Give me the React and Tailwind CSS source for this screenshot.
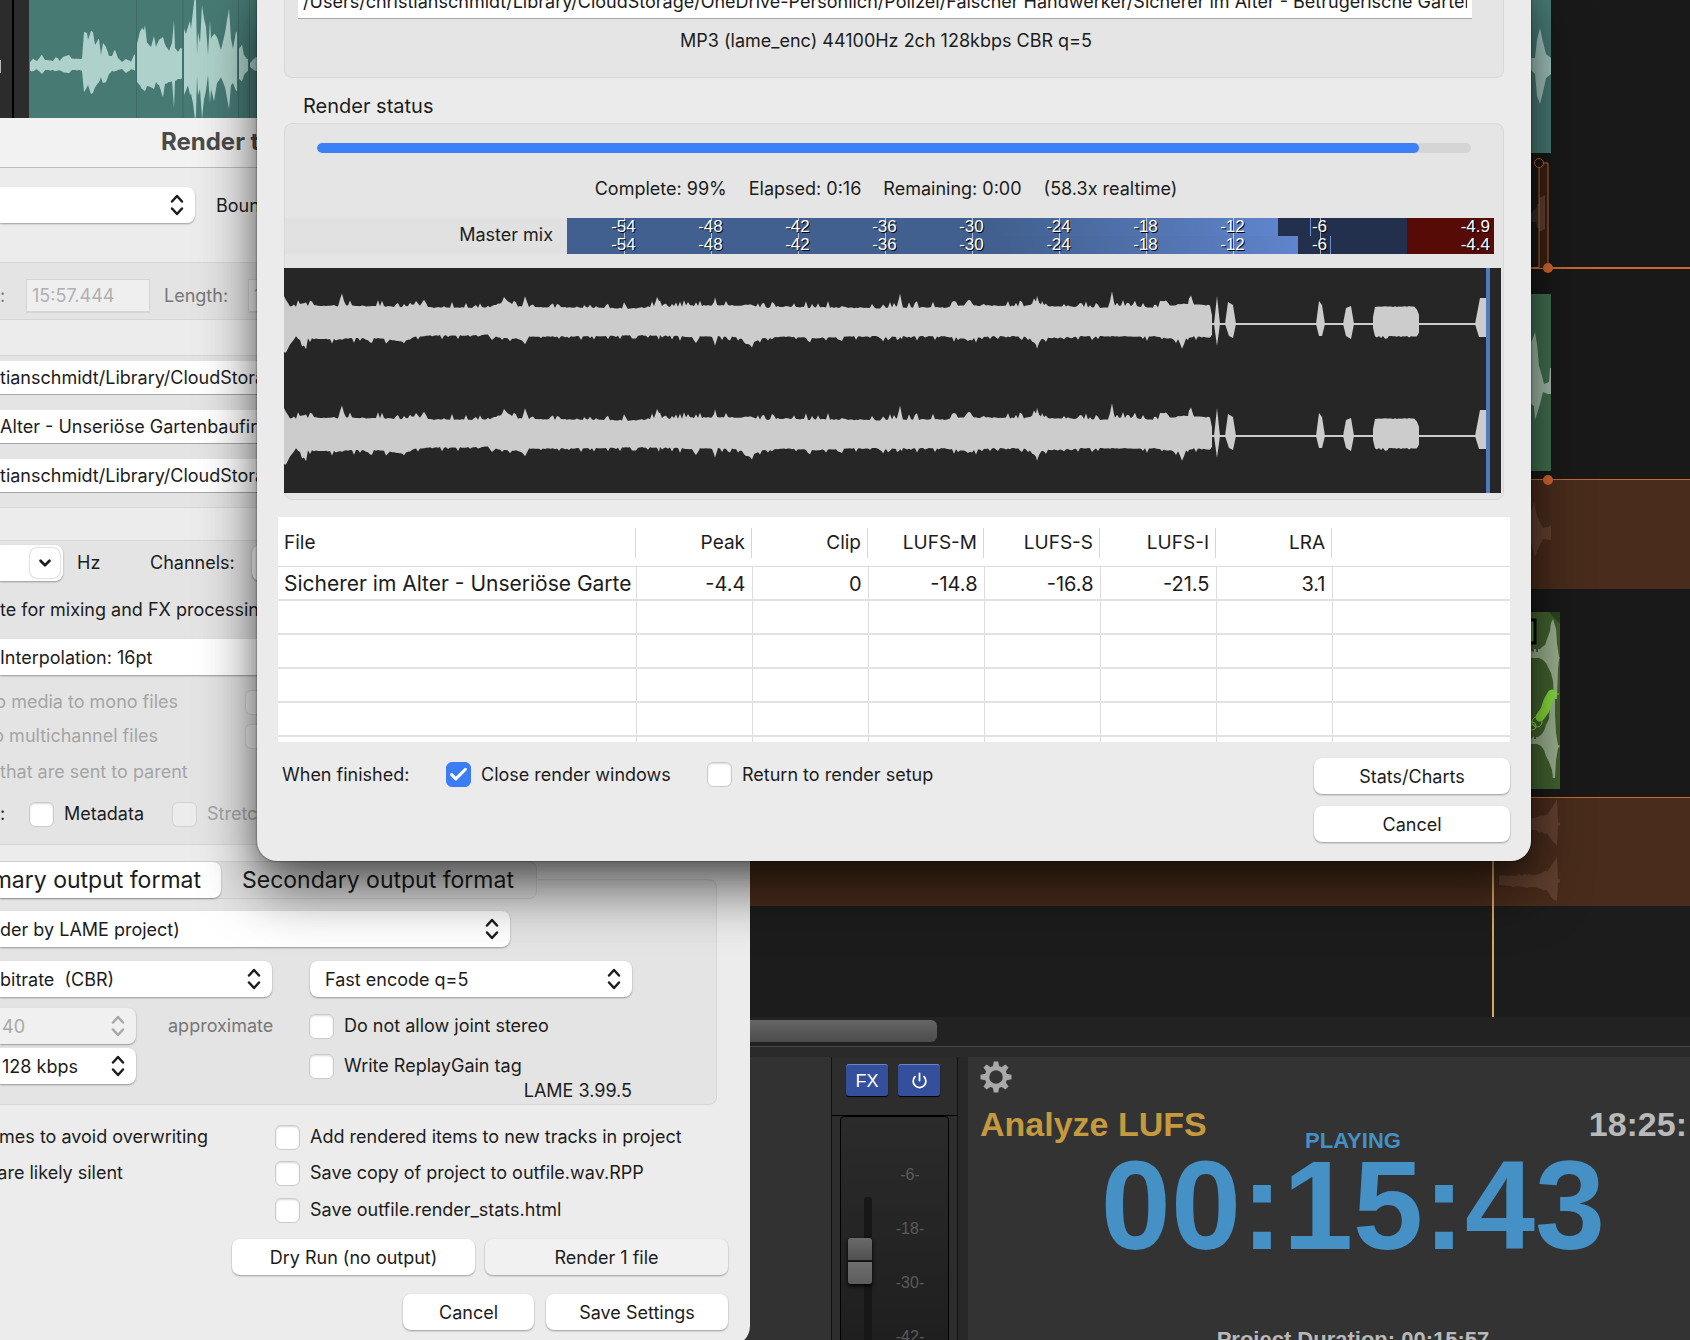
import React, { useState } from "react";
import { Check, ChevronDown, Power } from "lucide-react";

// Small seeded generator so the waveforms look the same on every render
const makeRandom = (seed) => {
  let s = seed;
  return () => {
    s = (s * 16807) % 2147483647;
    return s / 2147483647;
  };
};

// points: [x, up, down], interpolated and roughened into a closed path round `mid`
const wavePath = (points, mid, jitter, seed, step = 2) => {
  const random = makeRandom(seed);
  // mostly flat, with a narrow peak now and then
  const bump = () => (random() < 0.3 ? random() * jitter : (random() * jitter) / 6);
  const top = [];
  const bottom = [];
  for (let i = 0; i < points.length - 1; i++) {
    const [x0, u0, d0] = points[i];
    const [x1, u1, d1] = points[i + 1];
    for (let x = x0; x < x1; x += step) {
      const t = (x - x0) / (x1 - x0);
      const up = u0 + (u1 - u0) * t;
      const down = d0 + (d1 - d0) * t;
      const spike = bump();
      const dip = bump() * 0.7;
      top.push(`${x} ${(mid - up - (up > 3 ? spike : 0)).toFixed(1)}`);
      bottom.unshift(`${x} ${(mid + down + (down > 3 ? dip : 0)).toFixed(1)}`);
    }
  }
  return `M${top.join("L")}L${bottom.join("L")}Z`;
};

const mixPoints = [
  [0, 26, 28], [2, 24, 28], [6, 17, 20], [12, 17, 12], [18, 20, 18], [22, 21, 25], [24, 18, 14], [54, 17, 15],
  [56, 18, 15], [58, 27, 15], [60, 18, 14], [96, 17, 14], [120, 17, 17], [132, 19, 12], [136, 18, 12],
  [140, 24, 12], [144, 16, 11], [180, 16, 11], [204, 16, 10], [214, 18, 13], [222, 24, 14], [232, 17, 14],
  [238, 17, 16], [241, 27, 20], [245, 16, 12], [300, 16, 12], [340, 15, 11], [370, 16, 11], [373, 26, 11],
  [376, 17, 11], [398, 17, 12], [408, 18, 13], [412, 18, 19], [416, 18, 12], [428, 18, 12], [431, 21, 21],
  [434, 18, 12], [456, 18, 13], [466, 19, 21], [476, 16, 14], [500, 16, 12], [532, 16, 14], [560, 16, 12],
  [596, 15, 12], [599, 19, 17], [602, 16, 12], [613, 17, 12], [616, 29, 12], [619, 16, 12], [660, 16, 12],
  [680, 18, 14], [684, 23, 14], [690, 18, 14], [704, 18, 12], [740, 17, 12], [748, 19, 15], [753, 23, 22],
  [758, 18, 14], [796, 16, 12], [824, 16, 12], [828, 28, 12], [831, 18, 12], [870, 16, 12], [888, 18, 14],
  [894, 19, 15], [898, 20, 24], [902, 19, 14], [905, 20, 13], [907, 28, 13], [910, 19, 12], [926, 18, 13],
  [929, 3, 3],
];

// Short bursts after the music has ended
const burstPaths = (mid) => [
  `M930 ${mid}L933 ${mid - 28}L936 ${mid}L933 ${mid + 22}Z`,
  `M941 ${mid}L944 ${mid - 22}L949 ${mid - 19}L952 ${mid}L949 ${mid + 14}L945 ${mid + 12}Z`,
  `M1032 ${mid}L1035 ${mid - 23}L1038 ${mid - 19}L1041 ${mid}L1038 ${mid + 12}L1035 ${mid + 12}Z`,
  `M1059 ${mid}L1062 ${mid - 16}L1067 ${mid - 18}L1070 ${mid}L1067 ${mid + 15}L1062 ${mid + 12}Z`,
  `M1191 ${mid}L1196 ${mid - 26}L1203 ${mid - 26}L1203 ${mid + 13}L1195 ${mid + 13}Z`,
].join("");

const blockPoints = [[1089, 6, 4], [1091, 17, 12], [1130, 17, 12], [1133, 14, 12], [1137, 4, 4]];

const clipPoints = [
  [[30, 3, 6], [33, 6, 6], [37, 4, 4], [42, 10, 9], [45, 5, 5], [53, 4, 5], [56, 8, 6], [60, 4, 5],
    [63, 8, 7], [69, 10, 8], [72, 6, 5], [80, 6, 5], [82, 6, 6], [84, 33, 27], [87, 32, 22], [88, 25, 20],
    [91, 34, 29], [93, 33, 28], [95, 20, 22], [99, 26, 17], [101, 10, 12], [103, 22, 18], [106, 18, 17],
    [109, 9, 9], [112, 9, 6], [115, 15, 6], [118, 7, 5], [122, 3, 4], [126, 6, 8], [131, 3, 4], [134, 10, 5],
    [136, 11, 6]],
  [[137, 21, 17], [140, 33, 20], [142, 37, 24], [144, 35, 25], [145, 40, 26], [147, 22, 21], [151, 18, 22],
    [154, 29, 24], [156, 18, 17], [159, 25, 20], [163, 28, 32], [165, 20, 19], [169, 14, 17], [172, 22, 16],
    [174, 45, 43], [175, 17, 16], [178, 13, 14], [181, 17, 14], [183, 15, 13]],
  [[184, 36, 30], [186, 31, 25], [188, 38, 20], [190, 44, 30], [191, 36, 28], [193, 54, 38], [195, 70, 55],
    [196, 64, 50], [197, 10, 10], [198, 33, 30], [200, 22, 24], [202, 60, 54], [204, 46, 34], [206, 38, 25],
    [208, 10, 10], [210, 45, 38], [211, 26, 24], [214, 31, 36], [217, 28, 18], [221, 15, 12], [225, 32, 22],
    [229, 56, 44], [231, 26, 20], [233, 16, 18], [236, 33, 26], [238, 32, 25]],
  [[239, 16, 14], [242, 20, 16], [244, 10, 10], [247, 6, 6], [249, 6, 6]],
  [[250, 2, 2], [256, 8, 6], [259, 6, 5]],
];

const tailPoints = [[0, 5, 4], [18, 5, 5], [36, 6, 6], [48, 9, 9], [54, 18, 18], [58, 24, 20], [59, 2, 2], [62, 1, 1]];

const labelText = "text-[18px] leading-6 whitespace-nowrap";

function UpDown({ dim }) {
  return (
    <svg
      viewBox="0 0 16 22"
      className={`pointer-events-none absolute right-[10px] top-[7px] h-[22px] w-4 ${dim ? "text-[#a8a8a8]" : "text-[#1c1c1c]"}`}
      fill="none"
      stroke="currentColor"
      strokeWidth="2.5"
      strokeLinecap="round"
      strokeLinejoin="round"
    >
      <path d="M3 7.5L8 2l5 5.5M3 14.500l5 5.5 5-5.500" />
    </svg>
  );
}

function Popup({ label, value, className, pad = "pl-0", dim = false, round = "rounded-r-[8px]" }) {
  return (
    <div className={`relative h-9 shrink-0 ${className}`}>
      <select
        aria-label={label}
        disabled={dim}
        className={`h-9 w-full appearance-none text-[18px] opacity-100 shadow-[0_1px_2px_rgba(0,0,0,0.35)] outline-none ${pad} ${round} ${dim ? "bg-[#f0f0f0] text-[#a8a8a8]" : "bg-white text-[#1c1c1c]"}`}
      >
        <option>{value}</option>
      </select>
      <UpDown dim={dim} />
    </div>
  );
}

function TickBox({ label, checked = false, dim = false, gap = "gap-[10px]" }) {
  const [on, setOn] = useState(checked);
  return (
    <label className={`flex shrink-0 items-center ${gap} ${labelText} ${dim ? "text-[#a5a5a5]" : "text-[#1c1c1c]"}`}>
      <span className="relative size-[25px] shrink-0">
        <input
          type="checkbox"
          checked={on}
          disabled={dim}
          aria-label={label || "Option"}
          onChange={(e) => setOn(e.target.checked)}
          className={`block size-[25px] appearance-none rounded-[6px] border ${dim ? "border-[#d2d2d2] bg-[#ececec]" : "border-[#cbcbcb] bg-white shadow-[inset_0_1px_2px_rgba(0,0,0,0.15)]"} checked:border-[#3b7df5] checked:bg-[#3b7df5] checked:shadow-none`}
        />
        {on && (
          <Check strokeWidth={3.5} className="pointer-events-none absolute left-[2px] top-[2px] size-[21px] text-white" />
        )}
      </span>
      {label && <span>{label}</span>}
    </label>
  );
}

function PushButton({ children, className, tone = "bg-white" }) {
  return (
    <button
      type="button"
      className={`h-9 rounded-[8px] text-[18px] text-[#1c1c1c] shadow-[0_1px_2px_rgba(0,0,0,0.35)] ${tone} ${className}`}
    >
      {children}
    </button>
  );
}

function PathField({ label, value }) {
  return (
    <input
      type="text"
      aria-label={label}
      defaultValue={value}
      className="block h-[34px] w-[400px] border-b border-[#a5a5a5] bg-white text-[18px] text-[#1c1c1c] outline-none"
    />
  );
}

/* ---------- Arrange view behind the windows ---------- */

function Arrange() {
  return (
    <div className="relative min-h-0 flex-1 overflow-hidden bg-[#1c1c1c]">
      <div className="relative h-[153px] bg-[#191919]">
        <div className="absolute left-0 top-0 h-full w-[14px] border-r-2 border-black bg-[#2c2c2c]" />
        <div className="absolute left-[14px] top-0 h-full w-[15px] bg-[#2c2c2c]" />
        <div className="absolute left-0 top-[60px] h-[13px] w-px bg-[#b5b5b5]" />
        <div className="absolute left-[29px] top-0 h-full w-[1522px] bg-[#487a74]" />
        <svg className="absolute left-0 top-0 h-[153px] w-[258px]" viewBox="0 0 258 153">
          <path d="M136.500 0v153M183 0v153M238.500 0v153M249.500 0v153" stroke="#3d6b66" strokeWidth="1" />
          <g fill="#aed2cb">
            {clipPoints.map((points) => (
              <path key={points[0][0]} d={wavePath(points, 65, 1, 11, 1)} />
            ))}
          </g>
        </svg>
        <svg className="absolute left-[1531px] top-0 h-[153px] w-5" viewBox="0 0 20 153">
          <path d="M0 58h4l2-18 3-12 3 14 3 12 5 4v16l-5 4-3 14-3 12-3-8-2-22-4-4z" fill="#a2c4be" />
        </svg>
      </div>

      <div className="relative h-[116px] border-b-2 border-[#c8692f] bg-[#191919]">
        <svg className="absolute left-[1531px] top-0 h-[116px] w-[40px] overflow-visible" viewBox="0 0 40 116">
          <path d="M0 60l6-6v-3h2v24H6l-1-6H0z" fill="#33302e" />
          <path d="M8 10h9v105H8z" fill="#3b2213" />
          <path d="M8 45l6-3v34l-6 3z" fill="#5e4030" />
          <path d="M0 115h8V10h9v105" fill="none" stroke="#c8692f" />
          <circle cx="8" cy="10" r="4.500" fill="#191919" stroke="#c8692f" />
        </svg>
      </div>

      <div className="relative h-[210px] bg-[#191919]">
        <div className="absolute left-[300px] top-[25px] h-[177px] w-[1251px] bg-[#427050]" />
        <div className="absolute left-[1543px] -top-[6px] size-[10px] rounded-full bg-[#d2662e]" />
        <svg className="absolute left-[1531px] top-[25px] h-[177px] w-5" viewBox="0 0 20 177">
          <path d="M0 48l2-4 2-6 2 12 2 22 3 10 2 8 5-2 1-14h1v26h-3l-5-2-3 12-3 10-2 6-1-14-3-2z" fill="#a2bda8" />
        </svg>
      </div>

      <div className="relative h-[110px] border-t border-[#c8692f] bg-[#492c1b]">
        <svg className="absolute left-[1531px] top-0 h-[108px] w-6 overflow-visible" viewBox="0 0 24 108">
          <circle cx="17" cy="0" r="5" fill="#d2662e" />
          <path d="M0 32l3-10 3 14 4 8 2 4 8-2v14l-8-1-2 4-4 8-2 6-4-14z" fill="#61402f" />
        </svg>
      </div>

      <div className="relative h-[208px] bg-[#191919]">
        <div className="absolute left-[300px] top-[23px] h-[177px] w-[1260px] bg-[#436230]" />
        <svg className="absolute left-[1531px] top-[23px] h-[177px] w-[30px]" viewBox="0 0 30 177">
          <path d="M18 0h11v12q-8-8-11-12z" fill="#2c451e" />
          <path d="M0 39l3 1v-3h2v3h2v-3h2l2-2 3-2 2-6 3-8 1-8 2-4 3 10 1 14 2 14 1 1-1 1-1 10-1 30h-3l-1-18-2-8-3-6-2-4-3-3-4-2H0z" fill="#9cb18f" />
          <path d="M0 127l3-3v3h2v-2h2l3-2 3-4 2-6 3-6 1-16 1-12h4v24l1 18 2 12 2 1-2 2-2 12-1 18h-2l-1-8-3-8-3-6-2-6-3-4-4-2H0z" fill="#9cb18f" />
          <path d="M0 8h4v23H0" fill="#4b9a3c" stroke="#050505" strokeWidth="3" />
          <path d="M21 82l-4 7-3 9-5 7" stroke="#85dc3c" strokeWidth="9" strokeLinecap="round" fill="none" />
          <path d="M21 82l7 0M0 113l5 0" stroke="#85dc3c" fill="none" />
          <circle cx="6" cy="110" r="5" stroke="#85dc3c" fill="none" />
          <circle cx="1" cy="114" r="4" stroke="#85dc3c" fill="none" />
        </svg>
      </div>

      <div className="relative h-[109px] border-t border-[#c8692f] bg-[#492c1b]">
        <svg className="absolute left-[1499px] top-0 h-[108px] w-[62px]" viewBox="0 0 62 108">
          <g fill="#61402f">
            <path d={wavePath(tailPoints, 26, 3, 7, 2)} />
            <path d={wavePath(tailPoints, 83, 3, 9, 2)} />
          </g>
        </svg>
      </div>

      {/* Play cursor */}
      <div className="absolute bottom-0 left-[1492px] top-0 w-0.5 bg-[#d9a860]" />
    </div>
  );
}

function Gear() {
  return (
    <svg viewBox="-16 -16 32 32" className="size-8" fill="#a9a9a9">
      <circle r="9" fill="none" stroke="#a9a9a9" strokeWidth="4.500" />
      {[0, 45, 90, 135, 180, 225, 270, 315].map((angle) => (
        <path key={angle} d="M-3.500 -9L-2.200 -15.500H2.200L3.500 -9Z" transform={`rotate(${angle})`} />
      ))}
    </svg>
  );
}

function MixerStrip() {
  return (
    <div className="w-[127px] shrink-0 border-x border-black/60 bg-[#2d2d2d] pt-[7px]">
      <div className="flex gap-[10px] pl-[14px]">
        <button type="button" className="h-8 w-[42px] rounded-[3px] border-t border-[#6a83c8] bg-[#344f9c] text-[18px] leading-none text-white shadow-[0_1px_1px_#000]">
          FX
        </button>
        <button type="button" aria-label="Toggle effects" className="flex h-8 w-[42px] items-center justify-center rounded-[3px] border-t border-[#6a83c8] bg-[#344f9c] text-white shadow-[0_1px_1px_#000]">
          <Power size={17} strokeWidth={2.5} />
        </button>
      </div>
      <div className="mt-[19px] border-t border-black px-2">
        <div className="flex h-[260px] rounded-t-[4px] border border-black bg-linear-to-b from-[#2b2b2b] to-[#1d1d1d] pl-[7px]">
          <div className="relative w-6 shrink-0 pt-20">
            <div className="absolute right-0 top-20 h-[180px] w-2 rounded-t-[3px] bg-[#171717]" />
            <input
              type="range"
              aria-label="Volume"
              defaultValue="16"
              className="relative block h-[300px] w-6 appearance-none bg-transparent [writing-mode:vertical-lr] [&::-webkit-slider-thumb]:h-[46px] [&::-webkit-slider-thumb]:w-6 [&::-webkit-slider-thumb]:appearance-none [&::-webkit-slider-thumb]:rounded-[3px] [&::-webkit-slider-thumb]:bg-[linear-gradient(#6a6a6a,#505050_48%,#111_49%,#111_52%,#6e6e6e_53%,#5c5c5c)] [&::-webkit-slider-thumb]:shadow-[0_2px_4px_#000]"
            />
          </div>
          <div className="flex-1 pt-[31px] text-center text-[16px] leading-[54px] text-[#5b5b5b]">
            <p>-6-</p>
            <p>-18-</p>
            <p>-30-</p>
            <p>-42-</p>
          </div>
        </div>
      </div>
    </div>
  );
}

function BottomDock() {
  return (
    <div className="shrink-0 font-['Liberation_Sans',Arial,sans-serif]">
      <div className="h-[29px] bg-[#222222] pt-[3px]">
        <div className="h-[22px] w-[937px] rounded-r-[6px] bg-linear-to-b from-[#666666] to-[#4c4c4c]" />
      </div>
      <div className="h-[11px] border-t border-[#474747] bg-[#2a2a2a]" />
      <div className="flex h-[283px] overflow-hidden bg-[#282828]">
        <div className="w-[831px] shrink-0 bg-[#323232]" />
        <MixerStrip />
        <section className="ml-[10px] min-w-0 flex-1 bg-[#333333] pl-3 pt-1">
          <button type="button" aria-label="Settings" className="block">
            <Gear />
          </button>
          <div className="mt-[11px] flex h-10 justify-between whitespace-nowrap pr-[3px] text-[34px] font-bold leading-10">
            <h2 className="text-[#c5993e]">Analyze LUFS</h2>
            <time className="text-[#b9b9b9]">18:25:</time>
          </div>
          <div className="-mt-[14px] pl-9 text-center font-bold">
            <p className="text-[22px] leading-[22px] text-[#4590c4]">PLAYING</p>
            <p className="text-[126px] leading-[108px] text-[#4590c4]">00:15:43</p>
            <p className="mt-[68px] text-[22px] leading-6 text-[#b9b9b9]">Project Duration: 00:15:57</p>
          </div>
        </section>
      </div>
    </div>
  );
}

/* ---------- Render setup window ---------- */

function SetupWindow() {
  return (
    <section className="absolute isolate left-0 top-[118px] w-[750px] overflow-hidden rounded-br-[20px] bg-[#ececec] pb-4 text-[#1c1c1c]">
      <h1 className="h-[50px] border-b border-[#bdbdbd] bg-[#f2f2f2] pl-[161px] text-[24px] font-bold leading-[48px] text-[#4a4a4a]">
        Render to File
      </h1>

      <div className="flex h-[94px] gap-[21px] pt-[19px]">
        <Popup label="Source" value="" className="w-[195px]" />
        <span className={`pt-[7px] ${labelText}`}>Bounds:</span>
      </div>

      <div className="flex h-[58px] items-start border-y border-[#d6d6d6] bg-[#e4e4e4] pt-4 leading-[34px] text-[#777777]">
        <span className="w-[26px] text-[18px]">:</span>
        <input
          type="text"
          aria-label="End"
          disabled
          defaultValue="15:57.444"
          className="h-[34px] w-[124px] border border-b-2 border-[#d5d5d5] bg-[#efefef] pl-[5px] text-[18px] text-[#b0b0b0]"
        />
        <label htmlFor="length" className="ml-[14px] w-[84px] text-[18px]">Length:</label>
        <input
          id="length"
          type="text"
          disabled
          defaultValue="15:57.444"
          className="h-[34px] w-[124px] border border-b-2 border-[#d5d5d5] bg-[#efefef] pl-[5px] text-[18px] text-[#b0b0b0]"
        />
      </div>

      <div className="mt-[35px] flex h-[153px] flex-col gap-[15px] border-y border-[#d6d6d6] bg-[#e4e4e4] pt-[5px]">
        <PathField label="Directory" value="tianschmidt/Library/CloudStorage" />
        <PathField label="File name" value="Alter - Unseriöse Gartenbaufirma" />
        <PathField label="Render to" value="tianschmidt/Library/CloudStorage" />
      </div>

      <div className="mt-8 h-[305px] border-y border-[#d6d6d6] bg-[#e4e4e4] pt-1">
        <div className="flex h-9 items-center">
          <button type="button" aria-label="Sample rate" className="flex h-9 w-[63px] items-center justify-end rounded-r-[8px] bg-white pr-[3px] shadow-[0_1px_2px_rgba(0,0,0,0.35)]">
            <span className="flex size-[30px] items-center justify-center rounded-[7px] shadow-[0_0_2px_rgba(0,0,0,0.4)]">
              <ChevronDown size={18} strokeWidth={3.5} />
            </span>
          </button>
          <span className={`ml-[14px] w-[73px] ${labelText}`}>Hz</span>
          <span className={`w-[102px] ${labelText}`}>Channels:</span>
          <Popup label="Channels" value="Stereo" className="w-[150px]" pad="pl-3" round="rounded-[8px]" />
        </div>
        <p className={`flex h-[58px] items-center ${labelText}`}>te for mixing and FX processing</p>
        <Popup label="Resample mode" value="Interpolation: 16pt" className="w-[400px]" />
        <div className="mt-[10px] flex h-[34px] items-center">
          <span className={`flex w-[178px] justify-end text-[#a5a5a5] ${labelText}`}>o media to mono files</span>
          <span className="ml-[67px]"><TickBox dim /></span>
        </div>
        <div className="flex h-[34px] items-center">
          <span className={`flex w-[158px] justify-end text-[#a5a5a5] ${labelText}`}>o multichannel files</span>
          <span className="ml-[87px]"><TickBox dim /></span>
        </div>
        <p className={`flex h-[37px] items-center text-[#a5a5a5] ${labelText}`}>that are sent to parent</p>
        <div className="flex h-12 items-center">
          <span className={`w-[29px] ${labelText}`}>:</span>
          <span className="w-[143px]"><TickBox label="Metadata" /></span>
          <TickBox label="Stretch markers" dim />
        </div>
      </div>

      <div className="relative z-10 mt-4 flex h-[38px] w-[537px] rounded-r-[8px] border border-l-0 border-[#d2d2d2] bg-[#e2e2e2] text-[23px]">
        <button type="button" className="flex h-9 w-[221px] items-center justify-end whitespace-nowrap rounded-r-[8px] bg-white pr-5 shadow-[0_1px_2px_rgba(0,0,0,0.35)]">
          mary output format
        </button>
        <button type="button" className="h-9 whitespace-nowrap pl-[21px]">Secondary output format</button>
      </div>
      <div className="-mt-5 h-[226px] w-[717px] rounded-r-[8px] border border-l-0 border-[#d6d6d6] bg-[#e4e4e4] pt-[31px]">
        <Popup label="Format" value="der by LAME project)" className="w-[510px]" />
        <div className="mt-[14px] flex gap-[38px]">
          <Popup label="Mode" value={"bitrate\u00a0 (CBR)"} className="w-[272px]" />
          <Popup label="Encode quality" value="Fast encode q=5" className="w-[322px]" pad="pl-[15px]" round="rounded-[8px]" />
        </div>
        <div className="mt-[11px] flex items-center">
          <Popup label="Quality" value="40" className="w-[136px]" pad="pl-0.5" dim />
          <span className={`ml-8 w-[141px] text-[#777777] ${labelText}`}>approximate</span>
          <TickBox label="Do not allow joint stereo" />
        </div>
        <div className="mt-1 flex items-center">
          <Popup label="Bitrate" value="128 kbps" className="w-[136px]" pad="pl-0.5" />
          <span className="ml-[173px]"><TickBox label="Write ReplayGain tag" /></span>
        </div>
        <p className="w-[632px] text-right text-[18px] leading-[14px]">LAME 3.99.5</p>
      </div>

      <div className="mt-[14px] flex h-9 items-center">
        <span className={`flex w-[208px] justify-end ${labelText}`}>mes to avoid overwriting</span>
        <span className="ml-[67px]"><TickBox label="Add rendered items to new tracks in project" /></span>
      </div>
      <div className="flex h-9 items-center">
        <span className={`flex w-[123px] justify-end ${labelText}`}>are likely silent</span>
        <span className="ml-[152px]"><TickBox label="Save copy of project to outfile.wav.RPP" /></span>
      </div>
      <div className="flex h-[38px] items-center pl-[275px]">
        <TickBox label="Save outfile.render_stats.html" />
      </div>

      <div className="mt-[10px] flex justify-end gap-[10px] pr-[22px]">
        <PushButton className="w-[243px]">Dry Run (no output)</PushButton>
        <PushButton className="w-[243px]" tone="bg-[#f1f1f1]">Render 1 file</PushButton>
      </div>
      <div className="mt-[19px] flex justify-end gap-3 pr-[22px]">
        <PushButton className="w-[131px]">Cancel</PushButton>
        <PushButton className="w-[182px]">Save Settings</PushButton>
      </div>
    </section>
  );
}

/* ---------- Render progress window ---------- */

const ticks = ["-54", "-48", "-42", "-36", "-30", "-24", "-18", "-12", "-6"];

function MeterRow({ fill, hold, peak }) {
  return (
    <div className="relative flex h-[18px] items-center bg-[#22304d] pl-[13px] text-[17px] leading-[18px] text-white">
      <div className={`absolute inset-y-0 left-0 bg-linear-to-r from-[#41608f] from-60% to-[#6084cc] ${fill}`} />
      <div className={`absolute inset-y-0 w-px bg-[#6f8fd0] ${hold}`} />
      <div className="absolute inset-y-0 right-0 w-[87px] bg-[#560b06]" />
      {ticks.map((tick) => (
        <span key={tick} className="relative w-[87px] shrink-0 text-center [text-shadow:1px_1px_0_#000]">
          <i className="absolute inset-y-0 left-1/2 w-px bg-white/60" />
          <span className="relative">{tick}</span>
        </span>
      ))}
      <span className="relative ml-auto pr-1 [text-shadow:1px_1px_0_#000]">{peak}</span>
    </div>
  );
}

function Waveform() {
  return (
    <svg className="block h-[225px] w-full bg-[#262626]" viewBox="0 0 1217 225" preserveAspectRatio="none">
      <g fill="#cccccc">
        {[56, 168].map((mid) => (
          <g key={mid}>
            <path d={wavePath(mixPoints, mid, 7, 101)} />
            <path d={wavePath(blockPoints, mid, 4, 55)} />
            <path d={burstPaths(mid)} />
            <path d={`M928 ${mid - 1}h275v2h-275z`} />
          </g>
        ))}
      </g>
      <path d="M1202 0h4v225h-4z" fill="#5079c4" />
    </svg>
  );
}

const columns = ["Peak", "Clip", "LUFS-M", "LUFS-S", "LUFS-I", "LRA"];
const values = ["-4.4", "0", "-14.8", "-16.8", "-21.5", "3.1"];

function ResultTable() {
  return (
    <div className="h-[225px] overflow-hidden bg-white">
      <table className="w-full table-fixed border-collapse text-[20px] leading-6">
        <thead>
          <tr className="h-[49px] border-b border-[#dcdcdc]">
            <th className="w-[358px] p-0 pt-[3px] text-left font-normal">
              <div className="h-[30px] border-r border-[#d6d6d6] pl-[6px] text-[19px] leading-[30px]">File</div>
            </th>
            {columns.map((name) => (
              <th key={name} className="w-[116px] p-0 pt-[3px] text-right font-normal">
                <div className="h-[30px] border-r border-[#d6d6d6] pr-[6px] text-[19px] leading-[30px]">{name}</div>
              </th>
            ))}
            <td className="p-0" />
          </tr>
        </thead>
        <tbody>
          <tr className="h-[34px] border-b-2 border-[#e2e2e2]">
            <td className="overflow-hidden whitespace-nowrap border-r border-[#dcdcdc] p-0 pl-[6px] pt-[3px] text-[21px]">Sicherer im Alter - Unseriöse Garte</td>
            {values.map((value, i) => (
              <td key={columns[i]} className="border-r border-[#dcdcdc] p-0 pr-[6px] pt-[3px] text-right">{value}</td>
            ))}
            <td className="p-0" />
          </tr>
          {[0, 1, 2, 3, 4].map((row) => (
            <tr key={row} className="h-[34px] border-b-2 border-[#e2e2e2]">
              <td className="border-r border-[#dcdcdc] p-0" />
              {columns.map((name) => (
                <td key={name} className="border-r border-[#dcdcdc] p-0" />
              ))}
              <td className="p-0" />
            </tr>
          ))}
        </tbody>
      </table>
    </div>
  );
}

function ProgressWindow() {
  return (
    <section className="absolute -top-5 left-[257px] right-[159px] rounded-b-[20px] bg-[#ebebeb] pb-[19px] text-[#1c1c1c] shadow-[0_0_2px_rgba(0,0,0,0.7),0_8px_20px_rgba(0,0,0,0.15),0_28px_56px_rgba(0,0,0,0.6)]">
      <div className="ml-[27px] mr-[27px] h-[98px] rounded-b-[8px] border border-t-0 border-[#d8d8d8] bg-[#e5e5e5] px-[13px] pt-[5px]">
        <input
          type="text"
          aria-label="Output file"
          readOnly
          value="/Users/christianschmidt/Library/CloudStorage/OneDrive-Persönlich/Polizei/Falscher Handwerker/Sicherer im Alter - Betrügerische Gartenbaufirma"
          className="block h-[34px] w-[1174px] max-w-full border-b border-[#a5a5a5] bg-white px-[5px] text-[18px] outline-none"
        />
        <p className={`mt-[10px] pr-4 text-center ${labelText}`}>MP3 (lame_enc) 44100Hz 2ch 128kbps CBR q=5</p>
      </div>

      <h2 className="mb-[5px] ml-[46px] mt-4 text-[20px] leading-6">Render status</h2>

      <div className="mx-[27px] h-[377px] rounded-[8px] border border-[#d8d8d8] bg-[#e5e5e5] pt-[19px]">
        <div className="ml-8 mr-8 h-[10px] overflow-hidden rounded-full bg-[#d5d5d5]">
          <div className="h-full w-[95.5%] rounded-full bg-[#3b80f6]" />
        </div>
        <p className={`mt-6 flex justify-center gap-[22px] pr-4 ${labelText}`}>
          <span>Complete: 99%</span>
          <span>Elapsed: 0:16</span>
          <span>Remaining: 0:00</span>
          <span>(58.3x realtime)</span>
        </p>
        <div className="mt-[17px] flex pr-[9px]">
          <div className="w-[282px] shrink-0 bg-[#e1e1e1] pr-[14px] text-right text-[18px] leading-[34px]">Master mix</div>
          <div className="min-w-0 flex-1 overflow-hidden font-['Liberation_Sans',Arial,sans-serif]">
            <MeterRow fill="w-[711px]" hold="left-[743px]" peak="-4.9" />
            <MeterRow fill="w-[731px]" hold="left-[763px]" peak="-4.4" />
          </div>
        </div>
        <div className="-ml-px mr-0.5 mt-[14px]">
          <Waveform />
        </div>
      </div>

      <div className="ml-[21px] mr-[21px] mt-[17px]">
        <ResultTable />
      </div>

      <div className="mx-[21px] mt-[16px] flex items-start justify-between pl-1">
        <div className="flex items-center pt-1">
          <span className={`w-[164px] ${labelText}`}>When finished:</span>
          <span className="w-[261px]"><TickBox label="Close render windows" checked /></span>
          <TickBox label="Return to render setup" />
        </div>
        <div className="flex flex-col gap-3">
          <PushButton className="w-[196px]">Stats/Charts</PushButton>
          <PushButton className="w-[196px]">Cancel</PushButton>
        </div>
      </div>
    </section>
  );
}

export default function App() {
  return (
    <main className="relative flex h-screen w-full flex-col overflow-hidden bg-[#1c1c1c] font-[Inter,'Open_Sans',sans-serif]">
      <Arrange />
      <BottomDock />
      <SetupWindow />
      <ProgressWindow />
    </main>
  );
}
